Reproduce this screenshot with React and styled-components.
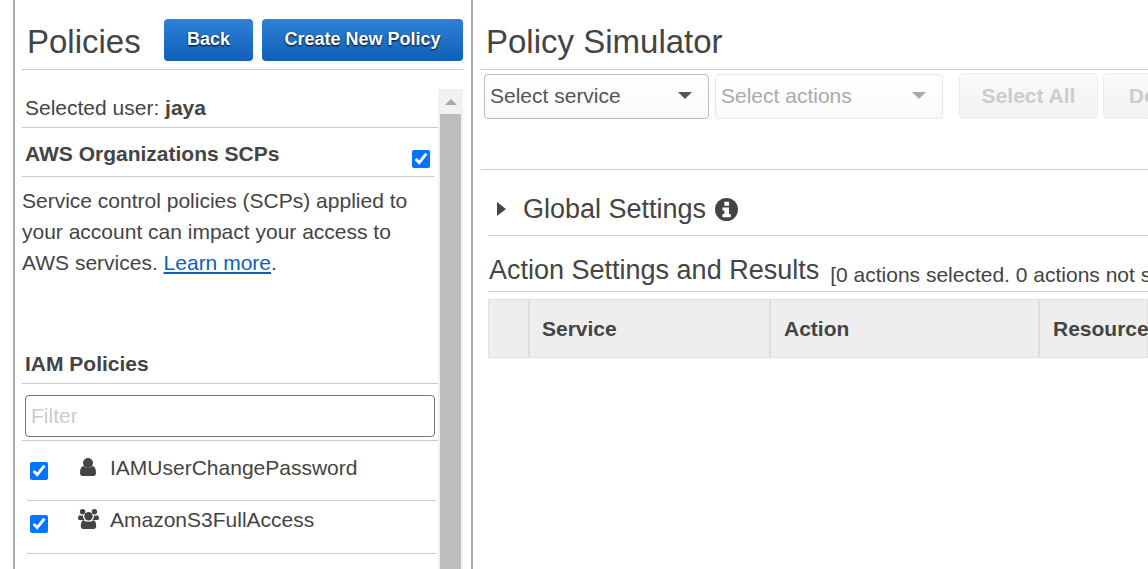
import React from "react";
import styled, { createGlobalStyle } from "styled-components";

const GlobalStyle = createGlobalStyle`
  html, body {
    margin: 0;
    height: 100%;
    overflow: hidden;
    background: #fff;
  }
  * {
    box-sizing: border-box;
  }
  body {
    font-family: "Liberation Sans", Arial, sans-serif;
    color: #444;
  }
`;

const Page = styled.div`
  display: flex;
  width: 1148px;
  height: 569px;
  padding-left: 13px;
  overflow: hidden;
`;

const Sidebar = styled.aside`
  flex: none;
  width: 460px;
  height: 569px;
  padding-left: 7px;
  border-left: 2px solid #aaa;
  border-right: 2px solid #aaa;
  overflow: hidden;
`;

const SideHeader = styled.header`
  display: flex;
  align-items: flex-start;
  width: 441px;
  height: 70px;
  padding-top: 19px;
  border-bottom: 1px solid #ccc;
`;

const PageTitle = styled.h1`
  flex: 1;
  margin: 0;
  padding: 3px 0 0 5px;
  font-size: 33px;
  line-height: 40px;
  font-weight: 400;
`;

const BlueButton = styled.button`
  width: ${(p) => p.$width}px;
  height: 42px;
  margin-left: ${(p) => p.$gap}px;
  padding: 0 0 1px;
  border: 0;
  border-radius: 4px;
  background: linear-gradient(#2f81d8, #0f60b6);
  color: #fff;
  font: 700 18px "Liberation Sans", Arial, sans-serif;
  text-shadow: 0 1px 2px #000;
`;

const SideBody = styled.div`
  display: flex;
  align-items: flex-start;
  padding-top: 19px;
`;

const SideList = styled.div`
  flex: none;
  width: 416px;
`;

const UserRow = styled.div`
  height: 39px;
  padding: 7px 0 0 3px;
  border-bottom: 1px solid #ccc;
  font-size: 21px;
  line-height: 24px;
`;

const ScpRow = styled.div`
  display: flex;
  width: 412px;
  height: 49px;
  padding: 14px 4px 0 3px;
  border-bottom: 1px solid #ccc;
`;

const SectionTitle = styled.h2`
  flex: 1;
  margin: 0;
  font-size: 21px;
  line-height: 24px;
  font-weight: 700;
`;

const Check = styled.input.attrs({ type: "checkbox" })`
  flex: none;
  width: 18px;
  height: 18px;
  margin: ${(p) => p.$margin};
  accent-color: #0075ff;
`;

const Description = styled.p`
  height: 160px;
  margin: 0;
  padding-top: 8px;
  font-size: 21px;
  line-height: 31px;

  a {
    color: #0f60b6;
  }
`;

const PoliciesHeading = styled.div`
  height: 47px;
  padding: 15px 0 0 3px;
  border-bottom: 1px solid #ccc;
`;

const FilterBox = styled.div`
  height: 57px;
  padding: 11px 0 0 3px;
  border-bottom: 1px solid #ccc;
`;

const FilterInput = styled.input`
  display: block;
  width: 410px;
  height: 42px;
  padding: 0 5px;
  border: 1px solid #767676;
  border-radius: 4px;
  font: 21px "Liberation Sans", Arial, sans-serif;

  &::placeholder {
    color: #ccc;
    opacity: 1;
  }
`;

const PolicyRow = styled.div`
  display: flex;
  align-items: flex-start;
  width: 409px;
  height: ${(p) => p.$height}px;
  margin-left: 5px;
  border-bottom: 1px solid #ccc;
  font-size: 21px;
`;

const PolicyIcon = styled.span`
  flex: none;
  display: flex;
  justify-content: center;
  width: 18px;
  margin: ${(p) => p.$top}px 13px 0 31px;
  line-height: 0;

  svg {
    flex: none;
  }
`;

const PolicyName = styled.span`
  padding-top: ${(p) => p.$top}px;
  line-height: 24px;
`;

const Scrollbar = styled.div`
  flex: none;
  display: flex;
  flex-direction: column;
  align-items: center;
  width: 25px;
  height: 500px;
  background: #f1f1f1;
`;

const ScrollArrow = styled.div`
  flex: none;
  width: 0;
  height: 0;
  margin: 10px 0 9px;
  border-left: 6px solid transparent;
  border-right: 6px solid transparent;
  border-bottom: 6px solid #a8a8a8;
`;

const ScrollThumb = styled.div`
  flex: 1;
  width: 21px;
  background: #bdbdbd;
`;

const Main = styled.main`
  flex: none;
  width: 675px;
  padding-left: 5px;
  overflow: hidden;
`;

const MainHeader = styled.header`
  height: 70px;
  margin-left: 3px;
  padding: 22px 0 0 5px;
  border-bottom: 1px solid #ccc;
`;

const MainTitle = styled.h1`
  margin: 0;
  font-size: 33px;
  line-height: 40px;
  font-weight: 400;
`;

const Toolbar = styled.div`
  display: flex;
  height: 100px;
  margin-left: 3px;
  padding: 4px 0 0 3px;
  border-bottom: 1px solid #ccc;
  white-space: nowrap;
`;

const Select = styled.div`
  flex: none;
  display: flex;
  align-items: center;
  justify-content: space-between;
  width: ${(p) => p.$width}px;
  height: 45px;
  margin-right: 6px;
  padding: 0 16px 2px 5px;
  border: 1px solid ${(p) => (p.$disabled ? "#e6e6e6" : "#bbb")};
  border-radius: 4px;
  background: linear-gradient(#fff, #fafafa);
  color: ${(p) => (p.$disabled ? "#aaa" : "#555")};
  font-size: 21px;
`;

const Caret = styled.span`
  width: 0;
  height: 0;
  margin-bottom: 1px;
  border-left: 7px solid transparent;
  border-right: 7px solid transparent;
  border-top: 7px solid ${(p) => (p.$disabled ? "#aaa" : "#555")};
`;

const GhostButton = styled.button`
  flex: none;
  width: ${(p) => p.$width}px;
  height: 46px;
  margin: -1px 5px 0 ${(p) => p.$left}px;
  padding: 0;
  border: 1px solid #eee;
  border-radius: 5px;
  background: linear-gradient(#fafafa, #f2f2f2);
  color: #ccc;
  font: 700 21px "Liberation Sans", Arial, sans-serif;
  white-space: nowrap;
`;

const GlobalRow = styled.div`
  display: flex;
  align-items: center;
  height: 66px;
  margin-left: 10px;
  padding: 13px 0 0 9px;
  border-bottom: 1px solid #ccc;
  font-size: 27px;
`;

const RightCaret = styled.span`
  width: 0;
  height: 0;
  margin-right: 17px;
  border-top: 7.5px solid transparent;
  border-bottom: 7.5px solid transparent;
  border-left: 9px solid #444;
`;

const InfoSvg = styled.svg`
  margin-left: 9px;
`;

const ActionHeading = styled.div`
  display: flex;
  align-items: flex-start;
  height: 56px;
  margin-left: 10px;
  padding: 18px 0 0 1px;
  border-bottom: 1px solid #ccc;
  white-space: nowrap;
`;

const ActionTitle = styled.h2`
  margin: 0 11px 0 0;
  font-size: 27px;
  line-height: 32px;
  font-weight: 400;
`;

const ActionCount = styled.span`
  margin-top: 9px;
  font-size: 21px;
  line-height: 24px;
`;

const TableHead = styled.div`
  display: flex;
  height: 59px;
  margin: 7px 0 0 10px;
  border: 1px solid #e0e0e0;
  background: #eee;
`;

const HeadCell = styled.div`
  flex: none;
  width: ${(p) => p.$width}px;
  padding-left: ${(p) => (p.$pad ? p.$pad : 0)}px;
  border-right: ${(p) => (p.$last ? 0 : "2px solid #ddd")};
  font-size: 21px;
  font-weight: 700;
  line-height: 57px;
  white-space: nowrap;
`;

const UserIcon = () => (
  <svg width="16" height="18" viewBox="0 0 16 18" fill="#444">
    <circle cx="8" cy="5" r="5" />
    <path d="M3.5 8 Q8 12 12.5 8 C15 8.5 16 11 16 15 Q16 18 13 18 H3 Q0 18 0 15 C0 11 1 8.5 3.5 8Z" />
  </svg>
);

const UsersIcon = () => (
  <svg width="21" height="20" viewBox="0 0 21 20" fill="#444">
    <circle cx="4.6" cy="2.7" r="2.7" />
    <circle cx="16.4" cy="2.7" r="2.7" />
    <circle cx="10.5" cy="7.2" r="4.2" />
    <path d="M1.5 6 Q3 7 5 6.6 Q4.8 9.5 6.5 11 H1.5 Q0 11 0 9.5 Q0 7 1.5 6Z" />
    <path d="M19.5 6 Q18 7 16 6.6 Q16.2 9.5 14.5 11 H19.5 Q21 11 21 9.5 Q21 7 19.5 6Z" />
    <path d="M5.5 11.2 Q10.5 14.5 15.5 11.2 C17.5 11.5 18.2 14 18.2 17 Q18.2 20 15.5 20 H5.5 Q2.8 20 2.8 17 C2.8 14 3.5 11.5 5.5 11.2Z" />
  </svg>
);

const InfoIcon = () => (
  <InfoSvg width="23" height="23" viewBox="0 0 24 24">
    <circle cx="12" cy="12" r="12" fill="#444" />
    <path
      fill="#fff"
      d="M9.8 3.8 H14.6 V8 H9.8Z M7.8 9.8 H14.6 V16.6 H16.4 V20.2 H7.8 V16.6 H9.8 V13 H7.8Z"
    />
  </InfoSvg>
);

export default function App() {
  return (
    <>
      <GlobalStyle />
      <Page>
        <Sidebar>
          <SideHeader>
            <PageTitle>Policies</PageTitle>
            <BlueButton $width={89} $gap={0}>Back</BlueButton>
            <BlueButton $width={201} $gap={9}>Create New Policy</BlueButton>
          </SideHeader>
          <SideBody>
            <SideList>
              <UserRow>
                Selected user: <b>jaya</b>
              </UserRow>
              <ScpRow>
                <SectionTitle>AWS Organizations SCPs</SectionTitle>
                <Check defaultChecked $margin="8px 0 0" />
              </ScpRow>
              <Description>
                Service control policies (SCPs) applied to your account can impact your access to AWS services.{" "}
                <a href="#learn">Learn more</a>.
              </Description>
              <PoliciesHeading>
                <SectionTitle>IAM Policies</SectionTitle>
              </PoliciesHeading>
              <FilterBox>
                <FilterInput placeholder="Filter" />
              </FilterBox>
              <PolicyRow $height={60}>
                <Check defaultChecked $margin="21px 0 0 3px" />
                <PolicyIcon $top={17}><UserIcon /></PolicyIcon>
                <PolicyName $top={15}>IAMUserChangePassword</PolicyName>
              </PolicyRow>
              <PolicyRow $height={53}>
                <Check defaultChecked $margin="14px 0 0 3px" />
                <PolicyIcon $top={8}><UsersIcon /></PolicyIcon>
                <PolicyName $top={7}>AmazonS3FullAccess</PolicyName>
              </PolicyRow>
            </SideList>
            <Scrollbar>
              <ScrollArrow />
              <ScrollThumb />
            </Scrollbar>
          </SideBody>
        </Sidebar>
        <Main>
          <MainHeader>
            <MainTitle>Policy Simulator</MainTitle>
          </MainHeader>
          <Toolbar>
            <Select $width={225}>
              Select service
              <Caret />
            </Select>
            <Select $width={228} $disabled>
              Select actions
              <Caret $disabled />
            </Select>
            <GhostButton $width={139} $left={10}>Select All</GhostButton>
            <GhostButton $width={170} $left={0}>Deselect All</GhostButton>
          </Toolbar>
          <GlobalRow>
            <RightCaret />
            Global Settings
            <InfoIcon />
          </GlobalRow>
          <ActionHeading>
            <ActionTitle>Action Settings and Results</ActionTitle>
            <ActionCount>[0 actions selected. 0 actions not simulated.]</ActionCount>
          </ActionHeading>
          <TableHead>
            <HeadCell $width={41} />
            <HeadCell $pad={12} $width={241}>Service</HeadCell>
            <HeadCell $pad={13} $width={269}>Action</HeadCell>
            <HeadCell $pad={13} $last $width={200}>Resource Type</HeadCell>
          </TableHead>
        </Main>
      </Page>
    </>
  );
}
